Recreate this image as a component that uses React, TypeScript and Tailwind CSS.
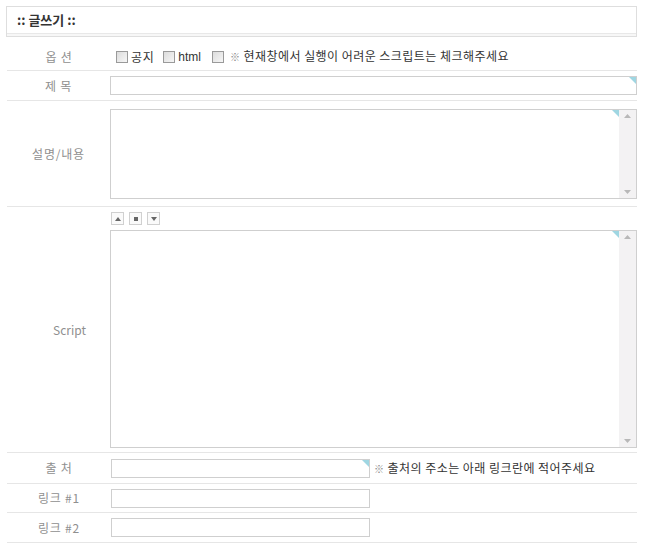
import React from "react";

const font = { fontFamily: '"Noto Sans CJK KR", "Noto Sans", sans-serif' };

function Corner() {
  return (
    <svg className="absolute right-0 top-0" width="7" height="7" viewBox="0 0 7 7">
      <polygon points="0,0 7,0 7,7" fill="#9fd6e2" />
    </svg>
  );
}

function Input({ w }: { w: string }) {
  return (
    <div className={`relative h-[19px] ${w} border border-[#cfcfcf] bg-white`}>
      <Corner />
    </div>
  );
}

function TextArea({ h }: { h: string }) {
  return (
    <div className={`relative flex ${h} w-[527px] border border-[#cfcfcf] bg-white`}>
      <div className="relative flex-1">
        <Corner />
      </div>
      <div className="flex w-[17px] flex-col items-center justify-between bg-[#f3f2f3] py-[4px]">
        <svg width="7" height="4" viewBox="0 0 7 4">
          <polygon points="3.5,0 7,4 0,4" fill="#b8b8b8" />
        </svg>
        <svg width="7" height="4" viewBox="0 0 7 4">
          <polygon points="0,0 7,0 3.5,4" fill="#b8b8b8" />
        </svg>
      </div>
    </div>
  );
}

function Check() {
  return (
    <span className="inline-block h-[12px] w-[12px] border border-[#9a9a9a] bg-gradient-to-br from-[#dcdcdc] to-[#f6f6f6]" />
  );
}

function Row({
  label,
  h,
  children,
  extra = "",
}: {
  label: string;
  h: string;
  children: React.ReactNode;
  extra?: string;
}) {
  return (
    <div className={`flex ${h} border-b border-[#e6e6e6] ${extra}`}>
      <div className="flex w-[104px] items-center justify-center text-[12px] tracking-[0.8px] text-[#8f8f8f]">
        {label}
      </div>
      <div className="flex flex-1 items-center">{children}</div>
    </div>
  );
}

function SmallBtn({ children }: { children: React.ReactNode }) {
  return (
    <div className="flex h-[13px] w-[13px] items-center justify-center border border-[#d0d0d0] bg-[#fafafa]">
      {children}
    </div>
  );
}

export default function App() {
  return (
    <div className="h-[552px] w-[650px] bg-white" style={font}>
      <div className="pl-[6px] pt-[6px]">
        <div className="flex h-[31px] w-[631px] flex-col border border-[#dedede] bg-white">
          <div className="flex flex-1 items-center pl-[10px] text-[13px] font-bold text-[#333]">
            :: 글쓰기 ::
          </div>
          <div className="h-[3px] border-t border-[#e8e8e8] bg-[#f7f7f7]" />
        </div>
      </div>
      <div className="ml-[7px] w-[630px]">
        <Row label="옵 션" h="h-[34px]" extra="pt-[6px]">
          <div className="flex items-center pl-[5px] text-[12px] leading-[14px] text-[#333]">
            <Check />
            <span className="ml-[3px] tracking-[0.6px]">공지</span>
            <span className="ml-[9px] flex items-center">
              <Check />
            </span>
            <span
              className="ml-[3px] leading-[14px]"
              style={{ fontFamily: '"Liberation Sans", Arial, sans-serif', fontSize: "12px" }}
            >
              html
            </span>
            <span className="ml-[11px] flex items-center">
              <Check />
            </span>
            <span className="ml-[6px] tracking-[0.45px]">
              <span className="text-[10px] text-[#888]">※</span> 현재창에서 실행이 어려운 스크립트는 체크해주세요
            </span>
          </div>
        </Row>
        <Row label="제 목" h="h-[30px]">
          <Input w="w-[527px]" />
        </Row>
        <Row label="설명/내용" h="h-[106px]">
          <TextArea h="h-[90px]" />
        </Row>
        <div className="flex h-[246px] border-b border-[#e6e6e6]">
          <div className="flex w-[104px] items-center justify-center pl-[22px] text-[12px] text-[#8f8f8f]">
            Script
          </div>
          <div className="flex flex-1 flex-col pt-[5px]">
            <div className="flex gap-[5px] pl-[1px]">
              <SmallBtn>
                <svg width="6" height="4" viewBox="0 0 6 4">
                  <polygon points="3,0 6,4 0,4" fill="#666" />
                </svg>
              </SmallBtn>
              <SmallBtn>
                <span className="block h-[4px] w-[4px] bg-[#666]" />
              </SmallBtn>
              <SmallBtn>
                <svg width="6" height="4" viewBox="0 0 6 4">
                  <polygon points="0,0 6,0 3,4" fill="#666" />
                </svg>
              </SmallBtn>
            </div>
            <div className="mt-[5px]">
              <TextArea h="h-[218px]" />
            </div>
          </div>
        </div>
        <Row label="출 처" h="h-[31px]">
          <Input w="w-[259px]" />
          <span className="ml-[4px] text-[12px] tracking-[0.45px] text-[#333]">
            <span className="text-[10px] text-[#888]">※</span> 출처의 주소는 아래 링크란에 적어주세요
          </span>
        </Row>
        <Row label="링크 #1" h="h-[29px]">
          <div className="h-[19px] w-[259px] border border-[#cfcfcf] bg-white" />
        </Row>
        <Row label="링크 #2" h="h-[30px]">
          <div className="h-[19px] w-[259px] border border-[#cfcfcf] bg-white" />
        </Row>
      </div>
    </div>
  );
}
